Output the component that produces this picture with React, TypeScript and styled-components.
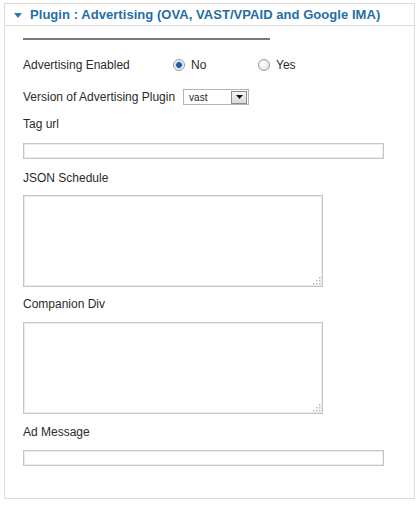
import React from 'react';
import styled, { createGlobalStyle } from 'styled-components';

const GlobalStyle = createGlobalStyle`
    body {
        margin: 0;
        background: #ffffff;
        font-family: "Liberation Sans", Arial, sans-serif;
        color: #2b2b2b;
    }
`;

const App: React.FC = () => {
    return (
        <>
            <GlobalStyle />
            <Panel>
                <Header>
                    <Arrow />
                    <HeaderTitle>Plugin : Advertising (OVA, VAST/VPAID and Google IMA)</HeaderTitle>
                </Header>
                <Body>
                    <Rule />
                    <InlineRow top={17}>
                        <RowLabel>Advertising Enabled</RowLabel>
                        <Choice>
                            <Radio checked />
                            <ChoiceText>No</ChoiceText>
                        </Choice>
                        <Choice>
                            <Radio />
                            <ChoiceText>Yes</ChoiceText>
                        </Choice>
                    </InlineRow>
                    <InlineRow top={16}>
                        <span>Version of Advertising Plugin</span>
                        <Select>
                            <SelectValue>vast</SelectValue>
                            <SelectButton>
                                <svg width="7" height="4" viewBox="0 0 7 4">
                                    <path d="M0 0 L7 0 L3.5 4 Z" fill="#111" />
                                </svg>
                            </SelectButton>
                        </Select>
                    </InlineRow>
                    <Label top={11}>Tag url</Label>
                    <TextInput top={11} />
                    <Label top={11}>JSON Schedule</Label>
                    <TextArea top={9}>
                        <Grip />
                    </TextArea>
                    <Label top={9}>Companion Div</Label>
                    <TextArea top={10}>
                        <Grip />
                    </TextArea>
                    <Label top={10}>Ad Message</Label>
                    <TextInput top={10} />
                </Body>
            </Panel>
        </>
    );
};

export default App;

const Grip: React.FC = () => (
    <svg width="9" height="9" viewBox="0 0 9 9">
        {[[7, 1], [7, 4], [4, 4], [7, 7], [4, 7], [1, 7]].map(([x, y]) => (
            <rect key={`${x}-${y}`} x={x} y={y} width="1.5" height="1.5" fill="#b8b8b8" />
        ))}
    </svg>
);

const Panel = styled.div`
    box-sizing: border-box;
    width: 411px;
    height: 496px;
    margin: 3px 0 0 4px;
    border: 1px solid #dcdcdc;
`;

const Header = styled.div`
    display: flex;
    align-items: center;
    height: 21px;
    padding-left: 9px;
    border-bottom: 1px solid #dcdcdc;
`;

const Arrow = styled.span`
    width: 0;
    height: 0;
    border-left: 4px solid transparent;
    border-right: 4px solid transparent;
    border-top: 5px solid #2a7ab8;
    margin-right: 8px;
    margin-top: 1px;
`;

const HeaderTitle = styled.span`
    font-size: 13px;
    font-weight: bold;
    color: #1f6ea8;
    letter-spacing: 0.05px;
    white-space: nowrap;
`;

const Body = styled.div`
    display: flex;
    flex-direction: column;
    align-items: flex-start;
    padding: 0 18px;
`;

const Rule = styled.div`
    width: 247px;
    height: 2px;
    margin-top: 12px;
    background: #7a7a7a;
`;

const InlineRow = styled.div<{ top: number }>`
    display: flex;
    align-items: center;
    height: 16px;
    margin-top: ${p => p.top}px;
    font-size: 12px;
`;

const RowLabel = styled.span`
    width: 150px;
`;

const Choice = styled.label`
    display: flex;
    align-items: center;
    width: 85px;
`;

const Radio = styled.span<{ checked?: boolean }>`
    box-sizing: border-box;
    width: 12px;
    height: 12px;
    border-radius: 50%;
    border: 1px solid #9a9a9a;
    background: ${p => p.checked
        ? 'radial-gradient(circle, #1f5fa8 0 2.5px, #8fb8e0 3px, #f4f4f4 4px)'
        : 'radial-gradient(circle at 40% 40%, #ffffff 0, #dcdcdc 100%)'};
    margin-right: 6px;
`;

const ChoiceText = styled.span`
    font-size: 12px;
`;

const Select = styled.div`
    box-sizing: border-box;
    display: flex;
    align-items: center;
    justify-content: space-between;
    width: 66px;
    height: 16px;
    margin-left: 8px;
    padding: 0 1px 0 5px;
    border: 1px solid #b4b4b4;
    background: #fff;
`;

const SelectValue = styled.span`
    font-size: 10px;
    color: #222;
`;

const SelectButton = styled.span`
    box-sizing: border-box;
    display: flex;
    align-items: center;
    justify-content: center;
    width: 16px;
    height: 13px;
    border: 1px solid #8a8a8a;
    background: linear-gradient(#f6f6f6, #dadada);
`;

const Label = styled.div<{ top: number }>`
    height: 16px;
    line-height: 16px;
    margin-top: ${p => p.top}px;
    font-size: 12px;
`;

const TextInput = styled.div<{ top: number }>`
    box-sizing: border-box;
    width: 361px;
    height: 16px;
    margin-top: ${p => p.top}px;
    border: 1px solid #c4c4c4;
    box-shadow: inset 0 0 0 1px #ececec;
`;

const TextArea = styled.div<{ top: number }>`
    box-sizing: border-box;
    display: flex;
    align-items: flex-end;
    justify-content: flex-end;
    width: 300px;
    height: 92px;
    margin-top: ${p => p.top}px;
    padding: 0 1px 1px 0;
    border: 1px solid #c4c4c4;
    box-shadow: inset 0 0 0 1px #ececec;
`;
